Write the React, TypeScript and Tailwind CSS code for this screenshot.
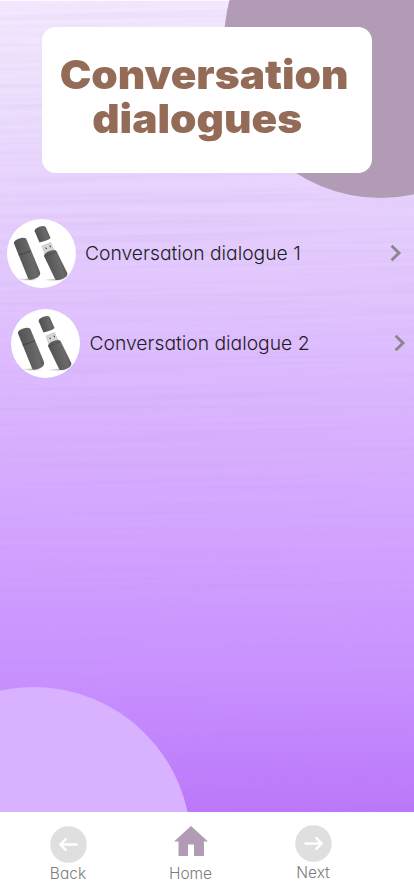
import React from "react";

function UsbPicture() {
  return (
    <svg viewBox="0 0 69 69" className="size-[69px] shrink-0 rounded-full bg-white">
      <defs>
        <linearGradient id="stick" x1="0" x2="1" y1="0.300" y2="0">
          <stop offset="0" stopColor="#505050" />
          <stop offset="0.6" stopColor="#6a6a6a" />
          <stop offset="1" stopColor="#4c4c4c" />
        </linearGradient>
        <radialGradient id="floor">
          <stop offset="0" stopColor="#aaa" />
          <stop offset="1" stopColor="#fff" stopOpacity="0" />
        </radialGradient>
      </defs>
      <ellipse cx="21" cy="60.500" rx="14" ry="1.800" fill="url(#floor)" />
      <ellipse cx="47" cy="60.800" rx="13" ry="1.800" fill="url(#floor)" />
      <path d="M7 24.500Q6.300 22 11.500 19.800Q17 17.600 19.300 19.800L33 53Q34 56.500 29.500 59Q23.500 62 21.300 60Z" fill="url(#stick)" />
      <path d="M11.500 35.800Q17 35.500 24 31.500" stroke="#3a3a3a" strokeWidth=".7" fill="none" />
      <path d="M27.700 12.200Q27.500 9.500 32.500 7.800Q37 6.300 38.700 8L43.500 19Q40.500 22 32.500 23.400Z" fill="url(#stick)" />
      <path d="M35 27L43.500 23.500L47 31L38 35.500Z" fill="#d6d6d6" stroke="#b5b5b5" strokeWidth=".5" />
      <path d="M38 28.500l2 .500-.800 1.500zM42.200 26.600l1.800.500-.700 1.600z" fill="#333" />
      <path d="M37 37Q37.500 34 42.500 32Q48 30 49.500 32L60.300 54Q61 57 56.500 59.500Q50.500 62 48.300 60.500Z" fill="url(#stick)" />
      <path d="M37.500 37Q43 36.300 49 32.500" stroke="#444" strokeWidth=".6" fill="none" />
    </svg>
  );
}

function Chevron() {
  return (
    <svg viewBox="0 0 12 18" className="h-[18px] w-3 shrink-0" fill="none" stroke="#8c858c" strokeWidth="2.900">
      <path d="M1.600 1.800L9 9L1.600 16.200" />
    </svg>
  );
}

function DialogueRow({ label, className }: { label: string; className: string }) {
  return (
    <li className={`flex h-[69px] items-center ${className}`}>
      <UsbPicture />
      <span className="ml-[9.500px] flex-1 text-[19.300px] leading-6 font-light whitespace-nowrap text-[#221d26]">{label}</span>
      <Chevron />
    </li>
  );
}

function ArrowCircle({ next = false }: { next?: boolean }) {
  return (
    <svg viewBox="0 0 37 37" className={`size-[37px] ${next ? "-scale-x-100" : ""}`} fill="none">
      <circle cx="18.500" cy="18.500" r="18.300" fill="#dfdfdf" />
      <path d="M26.500 18.500H10.500M15.700 13.200L10.200 18.500L15.700 23.800" stroke="white" strokeWidth="2.400" strokeLinecap="round" strokeLinejoin="round" />
    </svg>
  );
}

/* Single-storey "a" for the body text. */
const geometric: React.CSSProperties = { fontFeatureSettings: '"cv11"' };

export default function App() {
  return (
    <div className="relative isolate flex h-[896px] w-[414px] flex-col overflow-hidden bg-white font-['Inter','Liberation_Sans',sans-serif]">
      <div className="absolute inset-x-0 top-0 -z-10 h-[812px] overflow-hidden bg-[linear-gradient(180deg,#f3e9fe_0px,#ecdffd_100px,#e6d0fd_210px,#dfc0fe_330px,#d9b1ff_430px,#d1a2ff_550px,#c890ff_680px,#bb77fb_812px)]">
        <svg className="absolute inset-0" width="414" height="812">
          <filter id="grain" x="0" y="0" width="100%" height="100%">
            <feTurbulence type="fractalNoise" baseFrequency="0.003 0.200" numOctaves="3" seed="21" />
            <feColorMatrix values="0 0 0 0 .48  0 0 0 0 .28  0 0 0 0 .68  1.100 0 0 0 -.47" />
          </filter>
          <rect width="414" height="812" filter="url(#grain)" opacity=".27" transform="translate(-6 -8) rotate(-1 207 406) scale(1.040)" />
        </svg>
        <div className="absolute inset-x-0 top-0 h-px bg-white/80" />
        <div className="absolute -top-[115.500px] left-[223.500px] size-[313px] rounded-full bg-[#b29bb5]" />
        <div className="absolute top-[686.500px] -left-[124.500px] size-[315px] rounded-full bg-[#d8b1ff]" />
      </div>

      <header className="mt-[27px] ml-[41.500px] flex h-[145.500px] w-[330.500px] flex-col items-center rounded-[14px] bg-white pt-[25.500px]">
        <h1 className="scale-x-[1.060] text-center text-[40px] leading-[44px] font-black text-[#946b57]">
          <span className="-ml-[6px] block whitespace-nowrap">Conversation</span>
          <span className="-ml-[19px] block">dialogues</span>
        </h1>
      </header>

      <ul className="mt-[46px] flex grow flex-col gap-[21px]" style={geometric}>
        <DialogueRow label="Conversation dialogue 1" className="pr-[12.500px] pl-[6.500px]" />
        <DialogueRow label="Conversation dialogue 2" className="pr-[8.500px] pl-[11px]" />
      </ul>

      <nav className="flex h-[84px] items-start bg-white text-[15.500px] leading-5 font-light text-[#7d7d7d]" style={geometric}>
        <div className="ml-[38px] flex w-[60px] flex-col items-center pt-[13.500px]">
          <ArrowCircle />
          <span className="mt-[1.500px]">Back</span>
        </div>
        <div className="ml-[62.500px] flex w-[60px] flex-col items-center pt-[14px]">
          <svg viewBox="0 0 34 30" className="h-[30px] w-[34px]" fill="#b29bb5">
            <path d="M17 0L34 15.500H30V30H20V18.500H14V30H4.500V15.500H0Z" />
          </svg>
          <span className="mt-[8px]">Home</span>
        </div>
        <div className="ml-[62.500px] flex w-[60px] flex-col items-center pt-[12.500px]">
          <ArrowCircle next />
          <span className="mt-[1.500px]">Next</span>
        </div>
      </nav>
    </div>
  );
}
